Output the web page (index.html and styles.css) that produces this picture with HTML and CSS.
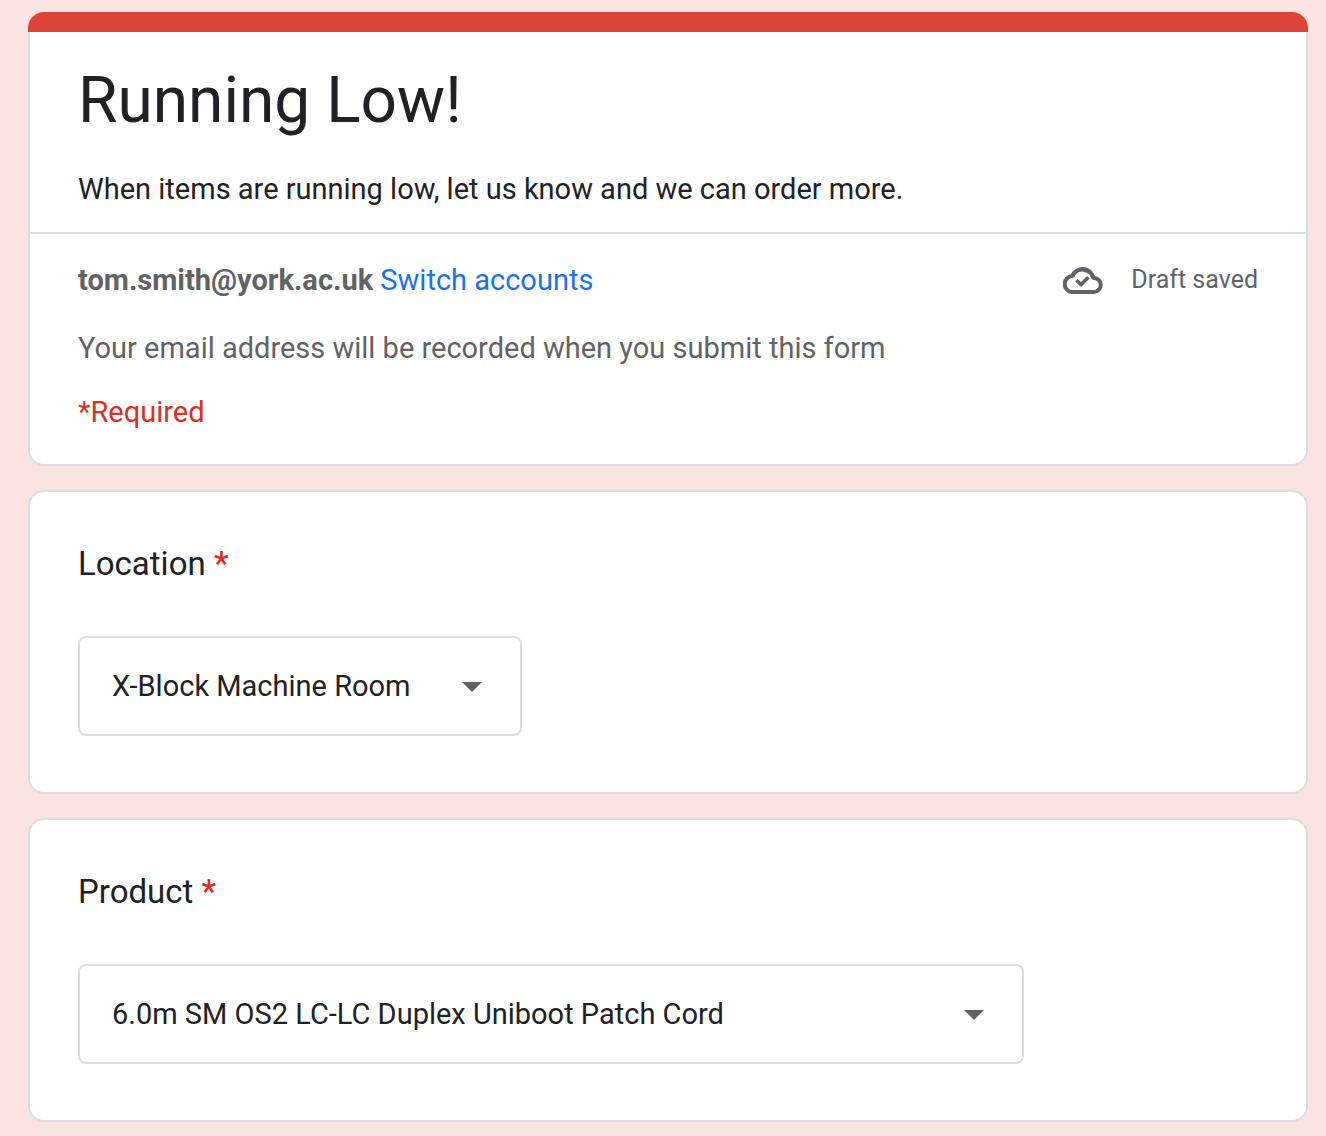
FILE: index.html
```html
<!DOCTYPE html>
<html lang="en">
<head>
    <meta charset="UTF-8">
    <meta name="viewport" content="width=device-width, initial-scale=1.0">
    <title>Running Low!</title>
    <link rel="stylesheet" href="styles.css">
</head>
<body>
    <form class="form">
        <section>
            <div class="bar"></div>
            <div class="card header">
                <div class="intro">
                    <h1>Running Low!</h1>
                    <p class="description">When items are running low, let us know and we can order more.</p>
                </div>
                <div class="account">
                    <div class="account-row">
                        <p><strong>tom.smith@york.ac.uk</strong> <a href="#">Switch accounts</a></p>
                        <div class="draft">
                            <svg class="cloud" viewBox="0 0 40 28" aria-hidden="true">
                                <path d="M10 26a8 8 0 0 1-.7-16A11.3 11.3 0 0 1 30.4 12 7 7 0 0 1 31 26z" stroke-width="4" stroke-linejoin="round"/>
                                <path d="M9.5 10A10.8 10.8 0 0 1 30.2 11.8" stroke-width="4"/>
                                <path d="M13.4 14.2l4.6 4.4 7.4-7.4" stroke-width="3.6"/>
                            </svg>
                            <span>Draft saved</span>
                        </div>
                    </div>
                    <p class="notice">Your email address will be recorded when you submit this form</p>
                    <p class="required">*Required</p>
                </div>
            </div>
        </section>

        <section class="card question">
            <label for="location">Location <span class="star">*</span></label>
            <div class="picker">
                <select id="location" name="location">
                    <option>X-Block Machine Room</option>
                </select>
                <svg class="arrow" viewBox="0 0 20 10" aria-hidden="true"><path d="M0 0h20L10 10z"/></svg>
            </div>
        </section>

        <section class="card question">
            <label for="product">Product <span class="star">*</span></label>
            <div class="picker wide">
                <select id="product" name="product">
                    <option>6.0m SM OS2 LC-LC Duplex Uniboot Patch Cord</option>
                </select>
                <svg class="arrow" viewBox="0 0 20 10" aria-hidden="true"><path d="M0 0h20L10 10z"/></svg>
            </div>
        </section>
    </form>
</body>
</html>
```
FILE: styles.css
```css
*{
    margin: 0;
    padding: 0;
    box-sizing: border-box;
}
body{
    background-color: #fae3e1;
    color: #202124;
    font-family: Roboto, sans-serif;
    font-size: 29px;
    line-height: 40px;
}
.form{
    display: flex;
    flex-direction: column;
    gap: 24px;
    padding: 12px 18px 14px 28px;
}
.bar{
    height: 20px;
    background-color: #db4437;
    border-radius: 16px 16px 0 0;
}
.card{
    background-color: #fff;
    border: 2px solid #dadce0;
    border-radius: 16px;
}
.header{
    border-top: none;
    border-radius: 0 0 16px 16px;
}
.intro{
    padding: 25px 48px 23px;
    border-bottom: 2px solid #dadce0;
}
h1{
    font-size: 64px;
    font-weight: 400;
    line-height: 88px;
}
.description{
    margin-top: 24px;
}
.account{
    padding: 26px 48px 32px;
}
.account-row{
    display: flex;
    justify-content: space-between;
}
strong, .notice, .draft{
    color: #5f6368;
}
a{
    color: #1a73e8;
    text-decoration: none;
}
.draft{
    display: flex;
    align-items: center;
    gap: 28px;
    font-size: 25px;
}
.cloud{
    width: 40px;
    height: 28px;
    fill: none;
    stroke: #5f6368;
}
.notice{
    margin-top: 28px;
}
.required{
    margin-top: 24px;
}
.required, .star{
    color: #d93025;
}
.star{
    font-weight: 500;
}
.question{
    padding: 48px 48px 56px;
}
.question label{
    display: block;
    font-size: 33px;
    line-height: 48px;
}
.picker{
    position: relative;
    width: 444px;
    max-width: 100%;
    margin-top: 48px;
}
.wide{
    width: 946px;
}
select{
    appearance: none;
    display: block;
    width: 100%;
    height: 100px;
    padding: 0 80px 0 32px;
    border: 2px solid #dadce0;
    border-radius: 8px;
    background-color: #fff;
    color: #202124;
    font: inherit;
}
.arrow{
    position: absolute;
    top: 46px;
    right: 40px;
    width: 20px;
    height: 10px;
    fill: #5f6368;
    pointer-events: none;
}
```
